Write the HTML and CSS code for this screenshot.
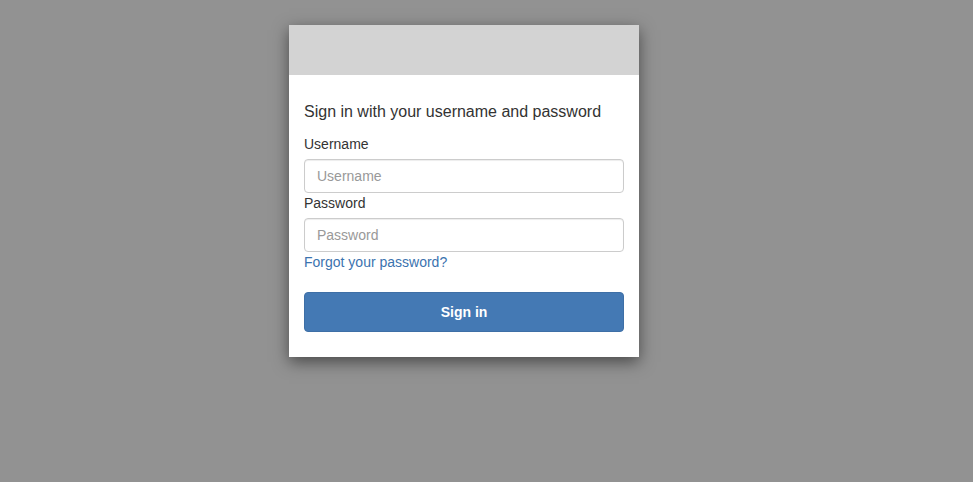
FILE: index.html
```html
<!DOCTYPE html>
<html lang="en">
<head>
<meta charset="utf-8">
<title>Sign in</title>
<link rel="stylesheet" href="styles.css">
</head>
<body>
<div class="page">
  <div class="card">
    <div class="card-header"></div>
    <form class="card-body">
      <h2 class="title">Sign in with your username and password</h2>
      <label class="label" for="username">Username</label>
      <input class="input" id="username" type="text" placeholder="Username">
      <label class="label" for="password">Password</label>
      <input class="input" id="password" type="password" placeholder="Password">
      <a class="forgot" href="#">Forgot your password?</a>
      <button class="btn" type="button">Sign in</button>
    </form>
  </div>
</div>
</body>
</html>
```

FILE: styles.css
```css
* { box-sizing: border-box; }
html, body {
  margin: 0;
  height: 100%;
}
body {
  background: #929292;
  font-family: "Liberation Sans", Arial, sans-serif;
  font-size: 14px;
  line-height: 20px;
  color: #333;
}
.page {
  display: flex;
  padding: 25px 0 0 289px;
}
.card {
  width: 350px;
  background: #fff;
  box-shadow: 0 5px 15px rgba(0, 0, 0, 0.5);
}
.card-header {
  height: 50px;
  background: #d3d3d3;
}
.card-body {
  display: flex;
  flex-direction: column;
  padding: 27px 15px 25px;
  margin: 0;
}
.title {
  margin: 0 0 12px;
  font-size: 16px;
  font-weight: normal;
  line-height: 20px;
  color: #333;
}
.label {
  display: block;
  margin-bottom: 5px;
  font-weight: normal;
}
.input {
  display: block;
  width: 100%;
  height: 34px;
  padding: 6px 12px;
  font-family: inherit;
  font-size: 14px;
  color: #555;
  background: #fff;
  border: 1px solid #ccc;
  border-radius: 4px;
  box-shadow: inset 0 1px 1px rgba(0, 0, 0, 0.075);
  outline: none;
}
.input::placeholder { color: #999; }
.forgot {
  align-self: flex-start;
  color: #3b73af;
  text-decoration: none;
  margin-bottom: 20px;
}
.btn {
  height: 40px;
  width: 100%;
  border: 1px solid #3e6fa6;
  border-radius: 4px;
  background: #4479b4;
  color: #fff;
  font-family: inherit;
  font-size: 14px;
  font-weight: bold;
  cursor: pointer;
}
```
